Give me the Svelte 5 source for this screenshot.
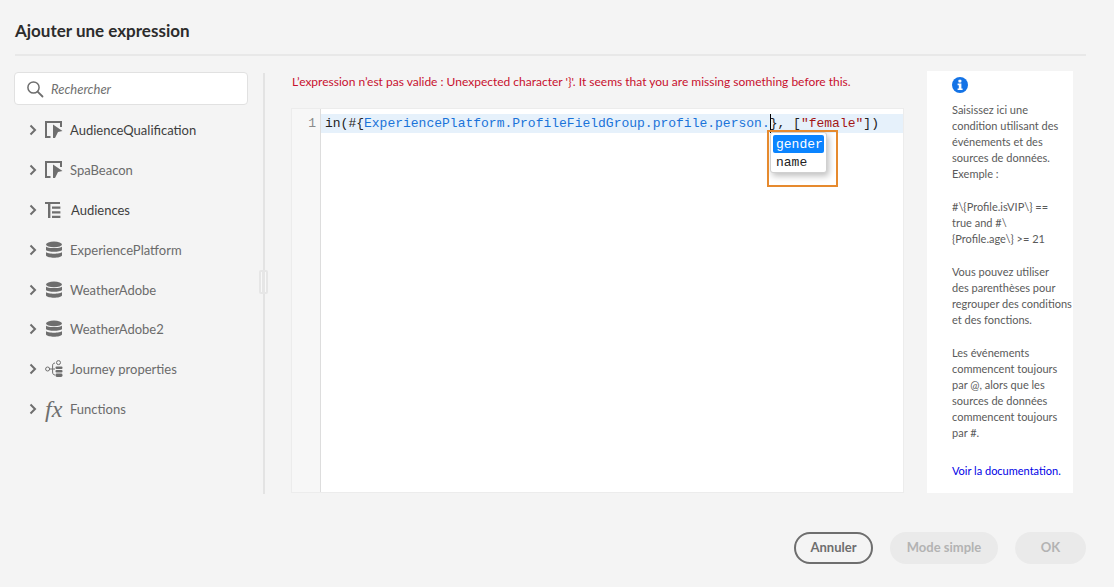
<script>
  const tree = [
    { label: 'AudienceQualification', icon: 'event', dark: true },
    { label: 'SpaBeacon', icon: 'event' },
    { label: 'Audiences', icon: 'list', dark: true },
    { label: 'ExperiencePlatform', icon: 'db' },
    { label: 'WeatherAdobe', icon: 'db' },
    { label: 'WeatherAdobe2', icon: 'db' },
    { label: 'Journey properties', icon: 'journey' },
    { label: 'Functions', icon: 'fx' }
  ];
</script>

<div class="dialog">
  <header>
    <h1>Ajouter une expression</h1>
  </header>

  <div class="body">
    <aside class="sidebar">
      <div class="search">
        <svg width="18" height="18" viewBox="0 0 18 18" fill="none" stroke="#6e6e6e" stroke-width="1.5">
          <circle cx="7.5" cy="7.5" r="5.6" />
          <path d="M11.6 11.6 L16.5 16.5" stroke-linecap="round" stroke-width="1.8" />
        </svg>
        <span>Rechercher</span>
      </div>
      <ul>
        {#each tree as item}
          <li class:dark={item.dark} class:audiences={item.icon === 'list'}>
            <svg class="chev" width="8" height="12" viewBox="0 0 8 12" fill="none" stroke="#6e6e6e" stroke-width="2">
              <path d="M1.5 1.5 L6 6 L1.5 10.5" />
            </svg>
            <span class="icon">
              {#if item.icon === 'event'}
                <svg width="18" height="17" viewBox="0 0 18 17" fill="#6e6e6e">
                  <path d="M0 0 H17 V6 H15 V2 H2 V15 H5.5 V17 H0 Z" />
                  <path d="M8 3.5 L17.5 10 L13 11 L10 17 H8 Z" />
                </svg>
              {:else if item.icon === 'list'}
                <svg width="18" height="16" viewBox="0 0 18 16" fill="#6e6e6e">
                  <path d="M0 0 H15 V2 H0 Z M3 1 H5.4 V16 H3 Z M7 4.6 H15.4 V6.8 H7 Z M7 9.2 H15.4 V11.4 H7 Z M7 13.8 H15.4 V16 H7 Z" />
                </svg>
              {:else if item.icon === 'db'}
                <svg width="18" height="18" viewBox="0 0 18 18" fill="#6e6e6e">
                  <ellipse cx="9" cy="3.4" rx="8" ry="2.8" />
                  <path d="M1 5.4 C2.5 7.6 15.5 7.6 17 5.4 V9 C15.5 11.4 2.5 11.4 1 9 Z" />
                  <path d="M1 11 C2.5 13.3 15.5 13.3 17 11 V14.6 C15.5 17.6 2.5 17.6 1 14.6 Z" />
                </svg>
              {:else if item.icon === 'journey'}
                <svg width="18" height="18" viewBox="0 0 18 18" fill="none" stroke="#6e6e6e" stroke-width="1">
                  <circle cx="2.6" cy="9" r="2" />
                  <circle cx="13.5" cy="2.6" r="2" />
                  <path d="M4.6 9 H7 M10 3 C7.6 3 7.6 5 7.6 6 V12 C7.6 14 8.5 15 10 15 M7.6 9 H10" />
                  <g fill="#6e6e6e" stroke="none">
                    <rect x="10.5" y="6.5" width="7" height="2.4" rx="1" />
                    <rect x="10.5" y="10" width="7" height="2.4" rx="1" />
                    <rect x="10.5" y="13.5" width="7" height="3.4" rx="1.4" />
                  </g>
                </svg>
              {:else}
                <span class="fx">fx</span>
              {/if}
            </span>
            <span class="label">{item.label}</span>
          </li>
        {/each}
      </ul>
    </aside>

    <div class="splitter"><span class="grip"></span></div>

    <section class="editor-col">
      <p class="error">L’expression n’est pas valide : Unexpected character '&#125;'. It seems that you are missing something before this.</p>
      <div class="editor">
        <div class="gutter"><span>1</span></div>
        <div class="code">
          <div class="line">
            <span>in(#&#123;</span><span class="field">ExperiencePlatform.ProfileFieldGroup.profile.person.</span><span class="caret"></span><span>&#125;, [</span><span class="str">"female"</span><span>])</span>
          </div>
          <div class="hints">
            <div class="hint selected">gender</div>
            <div class="hint">name</div>
          </div>
          <div class="callout"></div>
        </div>
      </div>
    </section>

    <aside class="help">
      <svg class="info" width="16" height="16" viewBox="0 0 16 16">
        <circle cx="8" cy="8" r="8" fill="#1473e6" />
        <rect x="6.4" y="2.8" width="3" height="2.6" rx="0.6" fill="#fff" />
        <path d="M5.6 6.6 H9.4 V11.4 H10.6 V13 H5.6 V11.4 H6.8 V8.2 H5.6 Z" fill="#fff" />
      </svg>
      <p>Saisissez ici une condition utilisant des événements et des sources de données. Exemple :</p>
      <p>#\&#123;Profile.isVIP\&#125; ==<br />true and #\<br />&#123;Profile.age\&#125; &gt;= 21</p>
      <p>Vous pouvez utiliser<br />des parenthèses pour<br />regrouper des conditions<br />et des fonctions.</p>
      <p>Les événements commencent toujours par @, alors que les sources de données commencent toujours par #.</p>
      <p class="doc"><a href="#doc">Voir la documentation.</a></p>
    </aside>
  </div>

  <footer>
    <button class="outline">Annuler</button>
    <button class="mode" disabled>Mode simple</button>
    <button class="ok" disabled>OK</button>
  </footer>
</div>

<style>
  :global(body) {
    margin: 0;
    background: #f4f4f4;
  }

  .dialog {
    width: 1114px;
    height: 587px;
    overflow: hidden;
    font-family: Lato, "Open Sans", sans-serif;
    color: #4b4b4b;
    background: #f4f4f4;
  }

  header {
    margin: 0 28px 0 15px;
    height: 54px;
    border-bottom: 2px solid #e8e8e8;
  }

  h1 {
    margin: 0;
    padding-top: 19px;
    font-size: 17px;
    line-height: 24px;
    font-weight: 700;
    color: #2c2c2c;
  }

  .body {
    display: flex;
    height: 424px;
    padding-left: 14px;
  }

  .sidebar {
    width: 234px;
    padding-top: 16px;
    flex: none;
  }

  .search {
    height: 31px;
    display: flex;
    align-items: center;
    gap: 7px;
    padding-left: 11px;
    background: #fff;
    border: 1px solid #e1e1e1;
    border-radius: 4px;
    font-size: 13px;
    font-style: italic;
    color: #707070;
  }

  ul {
    list-style: none;
    margin: 0;
    padding: 5px 0 0 15px;
  }

  li {
    height: 39.9px;
    display: flex;
    align-items: center;
    font-size: 13px;
    color: #6b6b6b;
  }

  li.dark {
    color: #3e3e3e;
  }

  .chev {
    margin-right: 8px;
    flex: none;
  }

  .icon {
    width: 25px;
    display: flex;
    align-items: center;
    flex: none;
  }

  .audiences .label {
    margin-left: 1px;
  }

  .fx {
    font-family: "Liberation Serif", serif;
    font-style: italic;
    font-size: 24px;
    line-height: 18px;
    color: #6e6e6e;
  }

  .splitter {
    width: 2px;
    margin: 17px 26px 0 15px;
    background: #e3e3e3;
    position: relative;
    flex: none;
    height: 421px;
  }

  .grip {
    position: absolute;
    left: -4px;
    top: 197px;
    width: 9px;
    height: 24px;
    box-sizing: border-box;
    border-radius: 2px;
    border: 2px solid #e6e6e6;
    background: linear-gradient(90deg, #f8f8f8 0 1px, #e6e6e6 1px 4px, #f8f8f8 4px);
  }

  .editor-col {
    width: 613px;
    flex: none;
  }

  .error {
    margin: 0;
    height: 52px;
    padding: 16px 0 0 1px;
    box-sizing: border-box;
    font-size: 12px;
    line-height: 20px;
    color: #c8102e;
    white-space: nowrap;
  }

  .editor {
    height: 385px;
    display: flex;
    background: #fff;
    border: 1px solid #ececec;
    box-sizing: border-box;
    font-family: "Liberation Mono", monospace;
    font-size: 13px;
  }

  .gutter {
    width: 29px;
    flex: none;
    background: #f7f7f7;
    border-right: 1px solid #dddddd;
    color: #8a8a8a;
    text-align: right;
    padding: 5px 4px 0 0;
    box-sizing: border-box;
    line-height: 19px;
  }

  .code {
    position: relative;
    flex: 1;
    padding-top: 5px;
  }

  .line {
    height: 19px;
    line-height: 19px;
    padding-left: 4px;
    background: #e6f1fb;
    color: #222;
    white-space: pre;
  }

  .field {
    color: #1a73d9;
  }

  .str {
    color: #a31515;
  }

  .caret {
    display: inline-block;
    width: 1px;
    height: 19px;
    margin-right: -1px;
    vertical-align: top;
    background: #000;
  }

  .hints {
    position: absolute;
    left: 449px;
    top: 23px;
    width: 57px;
    height: 41px;
    box-sizing: border-box;
    padding: 2px;
    background: #fff;
    border: 1px solid #d0d0d0;
    border-radius: 3px;
    box-shadow: 2px 3px 6px rgba(0, 0, 0, 0.25);
    z-index: 1;
  }

  .hint {
    height: 18px;
    line-height: 20px;
    padding-left: 3px;
    color: #222;
  }

  .selected {
    background: #0a84ff;
    color: #fff;
    border-radius: 2px;
  }

  .callout {
    position: absolute;
    left: 446px;
    top: 21px;
    width: 71px;
    height: 57px;
    box-sizing: border-box;
    border: 2px solid #e68a2e;
    z-index: 2;
  }

  .help {
    width: 146px;
    height: 422px;
    margin: 15px 0 0 23px;
    flex: none;
    box-sizing: border-box;
    padding: 6px 0 0 25px;
    background: #fff;
    font-size: 11px;
    line-height: 16px;
    color: #5a5a5a;
  }

  .info {
    display: block;
    margin-bottom: 9px;
  }

  .help p {
    margin: 0 0 17px;
  }

  .help .doc {
    margin-top: 22px;
  }

  a {
    color: #0000e6;
    text-decoration: none;
  }

  footer {
    display: flex;
    justify-content: flex-end;
    gap: 17px;
    padding: 52px 28px 0 0;
  }

  button {
    height: 32px;
    padding: 0 0 2px;
    border: 2px solid #eaeaea;
    border-radius: 16px;
    background: #eaeaea;
    color: #b3b3b3;
    font-family: inherit;
    font-size: 13px;
    font-weight: 700;
  }

  .outline {
    width: 79px;
    background: transparent;
    border-color: #6e6e6e;
    color: #6e6e6e;
  }

  .mode {
    width: 108px;
  }

  .ok {
    width: 71px;
  }
</style>
